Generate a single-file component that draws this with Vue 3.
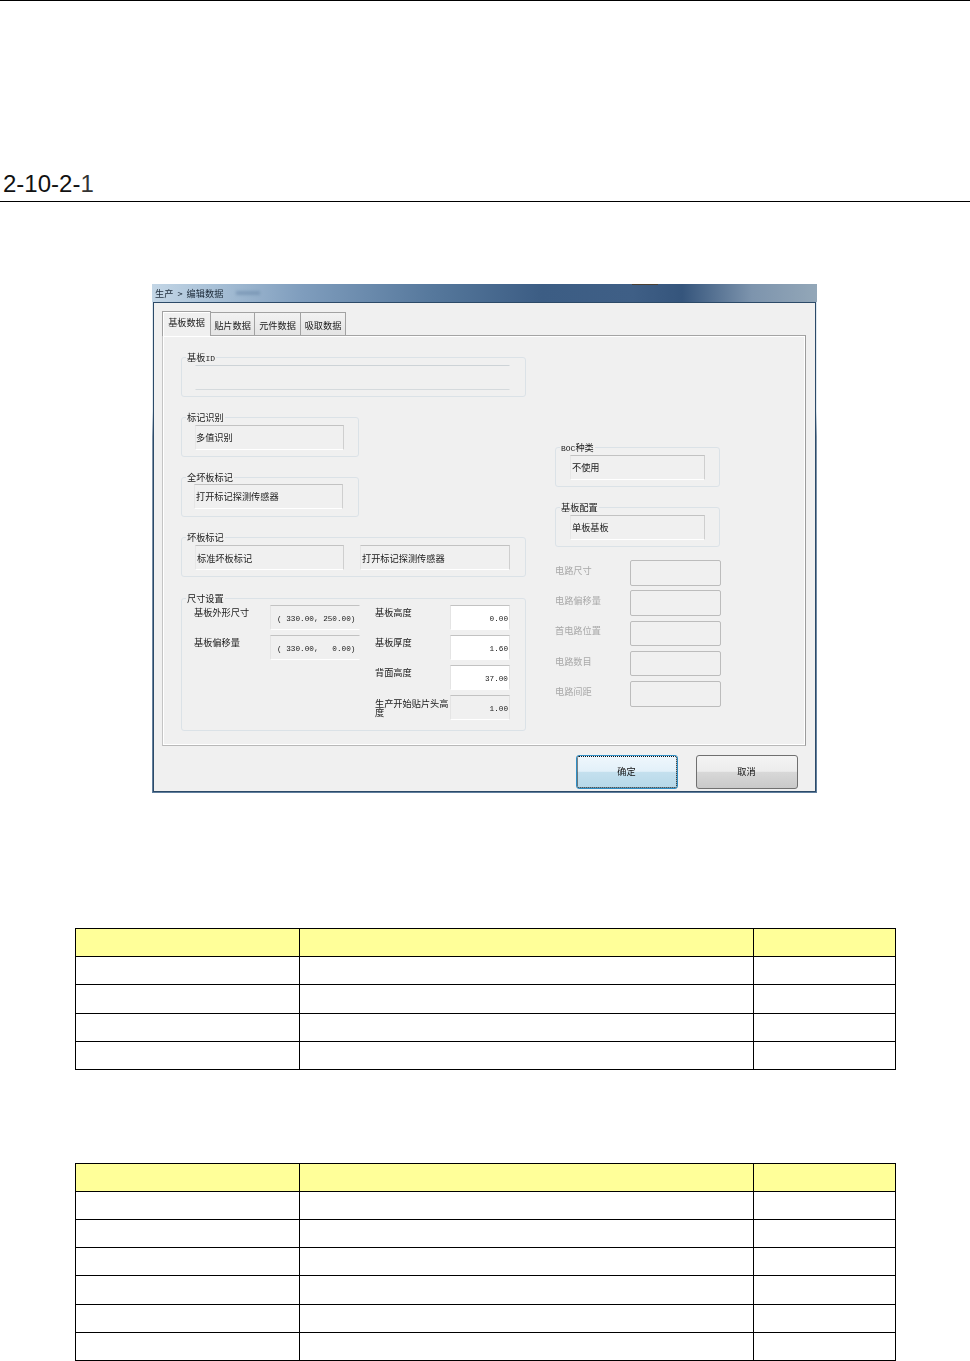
<script setup>
const tabs = [
  { label: '基板数据', w: 49, active: true },
  { label: '贴片数据', w: 44 },
  { label: '元件数据', w: 46 },
  { label: '吸取数据', w: 45 },
]
const sizeRows = [
  { label: '基板高度', value: '0.00', kind: 'input' },
  { label: '基板厚度', value: '1.60', kind: 'input' },
  { label: '背面高度', value: '37.00', kind: 'input' },
  { label: '生产开始贴片头高度', value: '1.00', kind: 'readonly' },
]
const outline = '( 330.00, 250.00)'
const offset = '( 330.00,   0.00)'
const circuit = ['电路尺寸', '电路偏移量', '首电路位置', '电路数目', '电路间距']
const tableOne = [28, 28, 29, 28, 28]
const tableTwo = [28, 28, 28, 28, 29, 28, 28]
</script>

<template>
  <main class="page">
    <header class="head">
      <h2 class="heading">2-10-2-<span class="thin">1</span></h2>
    </header>

    <section class="window">
      <div class="titlebar"><span>生产 &gt; 编辑数据</span></div>
      <div class="client">
        <nav class="tabs">
          <div
            v-for="t in tabs"
            :key="t.label"
            class="tab"
            :class="{ active: t.active }"
            :style="{ width: t.w + 'px' }"
          >{{ t.label }}</div>
        </nav>

        <div class="panel">
          <div class="col-left">
            <div class="group wide">
              <span class="legend">基板<span class="latin">ID</span></span>
              <div class="field plain long"></div>
            </div>
            <div class="group narrow">
              <span class="legend">标记识别</span>
              <div class="field">多值识别</div>
            </div>
            <div class="group narrow tight">
              <span class="legend">全坏板标记</span>
              <div class="field">打开标记探测传感器</div>
            </div>
            <div class="group wide pair">
              <span class="legend">坏板标记</span>
              <div class="field">标准坏板标记</div>
              <div class="field second">打开标记探测传感器</div>
            </div>
            <div class="group size">
              <span class="legend">尺寸设置</span>
              <div class="size-grid">
                <div class="lab" style="grid-area: 1 / 1">基板外形尺寸</div>
                <div class="coord" style="grid-area: 1 / 2">{{ outline }}</div>
                <div class="lab" style="grid-area: 2 / 1">基板偏移量</div>
                <div class="coord" style="grid-area: 2 / 2">{{ offset }}</div>
                <template v-for="(r, i) in sizeRows" :key="r.label">
                  <div class="lab rlab" :style="{ gridArea: (i + 1) + ' / 3' }">{{ r.label }}</div>
                  <div class="num" :class="r.kind" :style="{ gridArea: (i + 1) + ' / 4' }">{{ r.value }}</div>
                </template>
              </div>
            </div>
          </div>

          <div class="col-right">
            <div class="group side">
              <span class="legend"><span class="latin">BOC</span>种类</span>
              <div class="field">不使用</div>
            </div>
            <div class="group side">
              <span class="legend">基板配置</span>
              <div class="field">单板基板</div>
            </div>
            <div class="circuit">
              <template v-for="c in circuit" :key="c">
                <div class="dim">{{ c }}</div>
                <div class="dim-box"></div>
              </template>
            </div>
          </div>
        </div>

        <footer class="actions">
          <button class="btn primary" type="button"><span>确定</span></button>
          <button class="btn" type="button"><span>取消</span></button>
        </footer>
      </div>
    </section>

    <table class="grid first">
      <tbody>
        <tr v-for="(h, i) in tableOne" :key="i" :class="{ hd: i === 0 }" :style="{ height: h + 'px' }">
          <td class="c1"></td><td class="c2"></td><td class="c3"></td>
        </tr>
      </tbody>
    </table>

    <table class="grid second-table">
      <tbody>
        <tr v-for="(h, i) in tableTwo" :key="i" :class="{ hd: i === 0 }" :style="{ height: h + 'px' }">
          <td class="c1"></td><td class="c2"></td><td class="c3"></td>
        </tr>
      </tbody>
    </table>
  </main>
</template>

<style>
html, body { margin: 0; background: #fff; }
</style>

<style scoped>
.page {
  width: 970px;
  height: 1361px;
  overflow: hidden;
  background: #fff;
  font-family: "Noto Sans CJK SC", "Liberation Sans", sans-serif;
  color: #222;
}
.head {
  height: 200px;
  border-top: 1px solid #000;
  border-bottom: 1px solid #000;
  display: flex;
  align-items: flex-end;
}
.heading {
  margin: 0 0 3px 3px;
  font: 400 24px/28px "Liberation Sans", sans-serif;
  color: #111;
}
.thin { color: #333; }

.window {
  box-sizing: border-box;
  width: 665px;
  height: 509px;
  margin: 82px 0 0 152px;
  padding: 0 1px 1px;
  display: flex;
  flex-direction: column;
  background: linear-gradient(180deg, #dfe8ef 0 25%, #7f94aa 30%, #5f7d9c 100%);
}
.titlebar {
  position: relative;
  flex: 0 0 18px;
  margin: 0 -1px;
  display: flex;
  align-items: center;
  padding-left: 3px;
  font-size: 9.2px;
  word-spacing: 2px;
  color: #1c2a38;
  filter: blur(0.25px);
  background: linear-gradient(90deg, #c3d6e6 0, #a9c1d7 60px, #7f9dbd 150px, #56789c 280px, #3c5d84 390px, #3f5f86 480px, #35557c 530px, #7d94ad 600px, #93a7b8 665px);
}
.titlebar::before {
  content: "";
  position: absolute;
  left: 84px;
  top: 7px;
  width: 24px;
  height: 4px;
  background: #6d8bab;
  opacity: 0.6;
  filter: blur(1.5px);
}
.titlebar::after {
  content: "";
  position: absolute;
  left: 480px;
  top: 0;
  width: 26px;
  height: 1px;
  background: #4a4034;
}
.client {
  flex: 1;
  box-sizing: border-box;
  border: 1px solid #2c4a68;
  padding: 8px 9px 0 8px;
  background: #f0f0f0;
  display: flex;
  flex-direction: column;
  font-size: 9.2px;
  line-height: 12px;
  color: #1a1a1a;
}
.tabs, .panel, .actions { filter: blur(0.25px); }

.tabs {
  position: relative;
  z-index: 1;
  display: flex;
  align-items: flex-end;
  height: 24px;
}
.tab {
  box-sizing: border-box;
  height: 23px;
  padding-top: 2px;
  display: flex;
  align-items: center;
  justify-content: center;
  white-space: nowrap;
  border: 1px solid #a2a2a2;
  border-bottom: 0;
  border-left-width: 0;
  background: linear-gradient(180deg, #f2f2f2, #e4e4e4);
}
.tab.active {
  position: relative;
  z-index: 1;
  height: 25px;
  margin-bottom: -1px;
  padding: 0 0 4px;
  border-left-width: 1px;
  background: #f0f0f0;
  box-shadow: inset 1px 1px 0 #fff;
}

.panel {
  box-sizing: border-box;
  height: 411px;
  padding: 21px 0 0 18px;
  display: flex;
  border: 1px solid;
  border-color: #a4a4a4 #9c9c9c #b8b8b8 #c4c4c4;
  box-shadow: inset 0 0 0 1px #fff;
}
.col-left {
  width: 345px;
  flex: none;
  display: flex;
  flex-direction: column;
  gap: 20px;
}
.col-right {
  width: 166px;
  margin-left: 29px;
  padding-top: 90px;
  flex: none;
  display: flex;
  flex-direction: column;
  gap: 20px;
}

.group {
  position: relative;
  box-sizing: border-box;
  height: 40px;
  border: 1px solid #dbe2e7;
  border-radius: 3px;
  padding: 7px 0 0 13px;
  display: flex;
}
.wide { width: 345px; }
.narrow { width: 178px; }
.tight { padding-top: 6px; padding-left: 12px; }
.side { width: 165px; padding-left: 14px; }
.legend {
  position: absolute;
  top: -7px;
  left: 4px;
  padding: 0 1px;
  background: #f0f0f0;
  line-height: 12px;
  white-space: nowrap;
}
.latin {
  font-family: "Liberation Mono", monospace;
  font-size: 8px;
}
.field {
  box-sizing: border-box;
  width: 149px;
  height: 25px;
  padding: 0 0 1px 0;
  display: flex;
  align-items: center;
  white-space: nowrap;
  border: 1px solid;
  border-color: #c2c2c2 #cfcfcf #fff #e6e6e6;
}
.tight .field, .side .field { padding-left: 1px; }
.side .field { width: 135px; }
.field.long { width: 315px; }
.field.plain { border-color: #cdd3d7 #f0f0f0 #d5dadd #f0f0f0; }
.field.second { width: 150px; margin-left: 16px; }
.pair .field { padding: 1px 0 0 1px; }

.size { width: 345px; height: 133px; margin-top: 1px; padding: 6px 0 0 12px; display: block; }
.size-grid {
  display: grid;
  grid-template-columns: 76px 90px 90px 60px;
  grid-auto-rows: 25px;
  row-gap: 5px;
}
.lab { padding-top: 1px; white-space: nowrap; }
.rlab {
  margin-left: 15px;
  width: 75px;
  white-space: normal;
  line-height: 9px;
  padding-top: 3px;
}
.rlab:nth-last-child(2) { padding-top: 4px; word-break: break-all; }
.coord {
  box-sizing: border-box;
  height: 25px;
  width: 90px;
  padding: 3px 0 0 6px;
  font: 7.7px/20px "Liberation Mono", monospace;
  white-space: pre;
  border: 1px solid;
  border-color: #c2c2c2 #f0f0f0 #fff #e4e4e4;
}
.num {
  box-sizing: border-box;
  height: 25px;
  padding: 3px 1px 0 0;
  text-align: right;
  font: 7.7px/20px "Liberation Mono", monospace;
  border: 1px solid;
  border-color: #c2c2c2 #e2e2e2 #fff #e4e4e4;
}
.num.input { background: #fff; }
.num.readonly { background: #f0f0f0; }

.circuit {
  margin-top: -7px;
  display: grid;
  grid-template-columns: 75px 91px;
  grid-auto-rows: 25.5px;
  row-gap: 4.75px;
}
.dim {
  color: #a9a9a9;
  display: flex;
  align-items: center;
  padding-bottom: 6px;
}
.dim-box {
  box-sizing: border-box;
  border: 1px solid #bcbcbc;
  border-radius: 2px;
}

.actions {
  margin-top: 9px;
  padding-right: 8px;
  display: flex;
  justify-content: flex-end;
  gap: 18px;
}
.btn {
  box-sizing: border-box;
  width: 102px;
  height: 34px;
  padding: 0 1px 2px 0;
  font: inherit;
  color: #111;
  border: 1px solid #707070;
  border-radius: 3px;
  background: linear-gradient(180deg, #f4f4f4 0, #ececec 48%, #d8d8d8 50%, #c9c9c9 100%);
  display: flex;
  align-items: center;
  justify-content: center;
}
.btn.primary {
  border-color: #2f8ec4;
  background: linear-gradient(180deg, #eff7fc 0, #e2f0f9 48%, #c4e0ee 50%, #b6d8e8 100%);
  outline: 1px dotted #111;
  outline-offset: -2px;
}

.grid {
  border-collapse: collapse;
  table-layout: fixed;
  width: 820px;
  margin-left: 75px;
}
.first { margin-top: 135px; }
.second-table { margin-top: 93px; }
.grid td {
  box-sizing: border-box;
  padding: 0;
  border: 1px solid #000;
}
.c1 { width: 224px; }
.c2 { width: 454px; }
.c3 { width: 142px; }
.hd td { background: #ffff99; }
</style>
